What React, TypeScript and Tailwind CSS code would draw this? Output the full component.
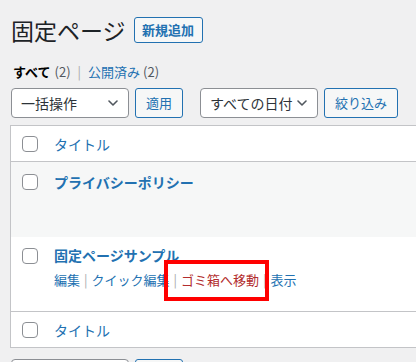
import React from "react";

const font = { fontFamily: '"Noto Sans CJK JP", "Noto Sans", sans-serif' };

const Chevron: React.FC = () => (
  <svg width="10" height="6" viewBox="0 0 10 6" fill="none" className="shrink-0">
    <path d="M1 1l4 4 4-4" stroke="#50575e" strokeWidth="1.6" strokeLinecap="round" strokeLinejoin="round" />
  </svg>
);

const Checkbox: React.FC = () => (
  <span className="block w-4 h-4 shrink-0 rounded-[4px] border border-[#8c8f94] bg-white" />
);

const Select: React.FC<{ label: string; width: string }> = ({ label, width }) => (
  <div
    className={`${width} h-[30px] flex items-center justify-between pl-[9px] pr-[10px] bg-white border border-[#8c8f94] rounded-[4px] text-[14px] text-[#2c3338]`}
  >
    <span className="leading-[20px]">{label}</span>
    <Chevron />
  </div>
);

const Button: React.FC<{ label: string; width: string }> = ({ label, width }) => (
  <div
    className={`${width} h-[30px] flex items-center justify-center bg-[#f6f7f7] border border-[#2271b1] rounded-[3px] text-[13px] text-[#2271b1]`}
  >
    {label}
  </div>
);

const Sep: React.FC = () => <span className="text-[#a7aaad] mx-[4px]">|</span>;

export default function App() {
  return (
    <div style={font} className="w-[416px] h-[362px] overflow-hidden bg-[#f0f0f1] text-[#1d2327]">
      <div className="pl-[11px] pt-[17px]">
        <div className="flex items-center h-[26px]">
          <h1 className="text-[23px] leading-[26px] font-normal text-[#1d2327]">固定ページ</h1>
          <div className="ml-[8px] w-[69px] h-[26px] flex items-center justify-center bg-[#f6f7f7] border border-[#2271b1] rounded-[3px] text-[13px] font-bold text-[#2271b1]">
            新規追加
          </div>
        </div>

        <div className="mt-[19px] h-[20px] flex items-center text-[13px] leading-[20px] pl-[2px]">
          <span className="font-bold text-black">すべて</span>
          <span className="ml-[4px] text-[#50575e]">(2)</span>
          <span className="mx-[7px] text-[#a7aaad]">|</span>
          <span className="text-[#2271b1]">公開済み <span className="text-[#50575e]">(2)</span></span>
        </div>

        <div className="mt-[6px] flex items-center">
          <Select label="一括操作" width="w-[118px]" />
          <div className="ml-[6px]">
            <Button label="適用" width="w-[48px]" />
          </div>
          <div className="ml-[17px]">
            <Select label="すべての日付" width="w-[118px]" />
          </div>
          <div className="ml-[6px]">
            <Button label="絞り込み" width="w-[74px]" />
          </div>
        </div>
      </div>

      <div className="ml-[10px] mt-[7px] w-[420px] bg-white border border-[#c3c4c7]">
        <div className="h-[36px] flex items-center pl-[11px] border-b border-[#c3c4c7] pt-[1px]">
          <Checkbox />
          <span className="ml-[16px] text-[14px] text-[#2271b1]">タイトル</span>
        </div>

        <div className="h-[75px] bg-[#f6f7f7] flex items-start pl-[11px] pt-[12px]">
          <Checkbox />
          <div className="ml-[16px] -mt-[2px] text-[14px] leading-[20px] font-bold text-[#2271b1]">
            プライバシーポリシー
          </div>
        </div>

        <div className="relative h-[75px] flex items-start pl-[11px] pt-[11px] border-b border-[#c3c4c7]">
          <Checkbox />
          <div className="ml-[16px] -mt-[3px]">
            <div className="text-[14px] leading-[20px] font-bold text-[#2271b1]">固定ページサンプル</div>
            <div className="mt-[5px] text-[13px] leading-[20px] text-[#2271b1] whitespace-nowrap">
              編集<Sep />クイック編集<Sep />
              <span className="text-[#b32d2e]">ゴミ箱へ移動</span><Sep />表示
            </div>
          </div>
          <div className="absolute left-[153px] top-[23px] w-[105px] h-[41px] border-4 border-[#ff0000]" />
        </div>

        <div className="h-[35px] flex items-center pl-[11px] pt-[1px]">
          <Checkbox />
          <span className="ml-[16px] text-[14px] text-[#2271b1]">タイトル</span>
        </div>
      </div>

      {/* bottom bulk actions, only their top edge is in view */}
      <div className="pl-[11px] mt-[11px] flex items-start">
        <div className="w-[118px] h-[30px] bg-white border border-[#8c8f94] rounded-[4px]" />
        <div className="ml-[6px] w-[48px] h-[30px] bg-[#f6f7f7] border border-[#2271b1] rounded-[3px]" />
      </div>
    </div>
  );
}
